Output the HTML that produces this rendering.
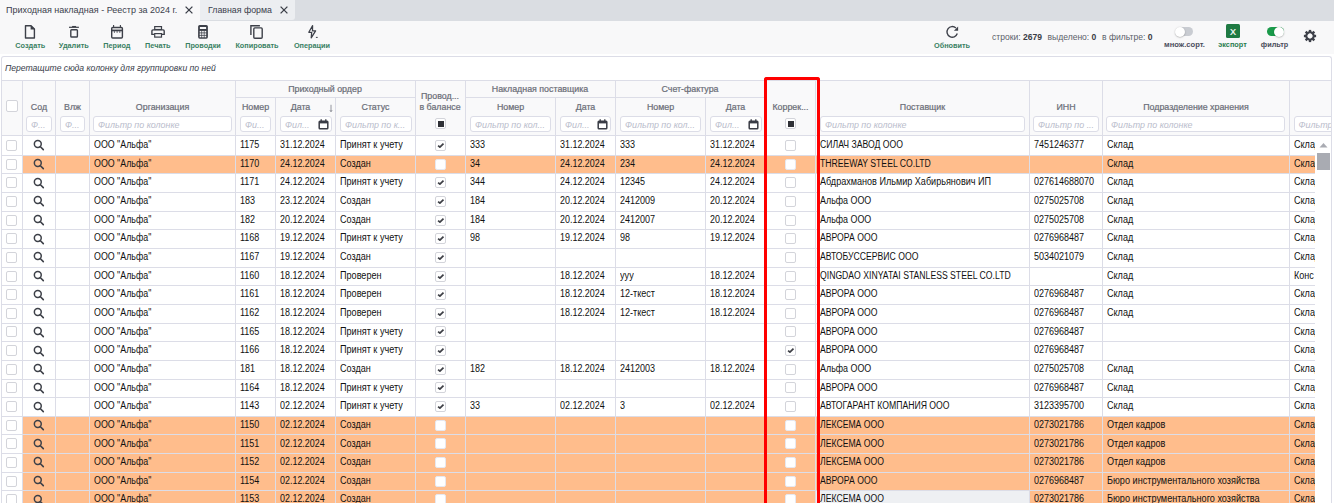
<!DOCTYPE html><html><head><meta charset="utf-8"><style>

html,body{margin:0;padding:0;}
body{width:1334px;height:503px;overflow:hidden;position:relative;background:#fff;font-family:"Liberation Sans", sans-serif;}
.t{position:absolute;white-space:nowrap;line-height:0;height:0;}
.t::before{content:"";}
.cb{position:absolute;box-sizing:border-box;width:11px;height:11px;border:1px solid #d3d4da;border-radius:2px;background:#fff;}
.fb{position:absolute;box-sizing:border-box;height:16px;border:1px solid #dcdde7;border-radius:3px;background:#fff;overflow:hidden;}
.ph{position:absolute;left:4px;top:7.69px;line-height:0;font-style:italic;font-size:8.9px;color:#b9bccb;white-space:nowrap;}

</style></head><body>
<div style="position:absolute;left:0px;top:21px;width:1334px;height:33px;background:#f8f8f9;"></div>
<div style="position:absolute;left:0px;top:0px;width:1334px;height:21px;background:#dadde2;"></div>
<div style="position:absolute;left:0px;top:0px;width:200px;height:21px;background:#f8f8f9;"></div>
<div style="position:absolute;left:200px;top:0px;width:95px;height:20px;background:#eceef1;border-radius:0 0 3px 0;"></div>
<div class="t" style="left:6px;top:9.68px;font-size:9.5px;transform:scaleX(0.9474);transform-origin:0 0;color:#3b404c;">Приходная накладная - Реестр за 2024 г.</div>
<div class="t" style="left:207.5px;top:9.68px;font-size:9.5px;transform:scaleX(0.9263);transform-origin:0 0;color:#3b404c;">Главная форма</div>
<svg style="position:absolute;left:183.5px;top:4.699999999999999px" width="10" height="10" viewBox="0 0 10 10"><path d="M1.6 1.6 L8.4 8.4 M8.4 1.6 L1.6 8.4" stroke="#3b3f48" stroke-width="1.3"/></svg>
<svg style="position:absolute;left:278.6px;top:4.699999999999999px" width="10" height="10" viewBox="0 0 10 10"><path d="M1.6 1.6 L8.4 8.4 M8.4 1.6 L1.6 8.4" stroke="#3b3f48" stroke-width="1.3"/></svg>
<svg style="position:absolute;left:0;top:0" width="1334" height="60" viewBox="0 0 1334 60"><path d="M25.5 25.7 H31.0 L34.4 29.1 V38.0 H25.5 Z" fill="none" stroke="#3d4049" stroke-width="1.4" stroke-linejoin="round"/><path d="M30.6 25.0 L35.1 29.5 H30.6 Z" fill="#3d4049"/><path d="M69 27.3 H78.9" stroke="#3d4049" stroke-width="1.2"/><path d="M72.1 26.5 H76.1" stroke="#3d4049" stroke-width="1.1"/><rect x="70.8" y="29.7" width="6.6" height="7.3" rx="0.8" fill="none" stroke="#3d4049" stroke-width="1.4"/><rect x="111.7" y="27.5" width="10.7" height="10.5" rx="1" fill="none" stroke="#3d4049" stroke-width="1.4"/><rect x="111.7" y="29.6" width="10.7" height="1.7" fill="#3d4049"/><path d="M113.6 25 V27.6 M120.4 25 V27.6" stroke="#3d4049" stroke-width="1.1"/><path d="M114.4 31.2 V32.8 M117.1 31.2 V32.8 M119.8 31.2 V32.8" stroke="#3d4049" stroke-width="0.9"/><rect x="154.7" y="26.6" width="6.8" height="2.9" fill="none" stroke="#3d4049" stroke-width="1.2"/><path d="M154.2 34.4 H151.9 V31 Q151.9 29.9 153 29.9 H163.1 Q164.2 29.9 164.2 31 V34.4 H162" fill="none" stroke="#3d4049" stroke-width="1.4"/><rect x="154.7" y="33.6" width="6.8" height="3.5" fill="none" stroke="#3d4049" stroke-width="1.2"/><rect x="198.1" y="25" width="9.8" height="13.7" rx="1.6" fill="#3d4049"/><rect x="199.9" y="27" width="6.2" height="2" fill="#f8f8f9"/><rect x="199.7" y="30.9" width="1.7" height="1.6" fill="#f8f8f9"/><rect x="199.7" y="33.3" width="1.7" height="1.6" fill="#f8f8f9"/><rect x="199.7" y="35.7" width="1.7" height="1.6" fill="#f8f8f9"/><rect x="202.1" y="30.9" width="1.7" height="1.6" fill="#f8f8f9"/><rect x="202.1" y="33.3" width="1.7" height="1.6" fill="#f8f8f9"/><rect x="202.1" y="35.7" width="1.7" height="1.6" fill="#f8f8f9"/><rect x="204.5" y="30.9" width="1.7" height="1.6" fill="#f8f8f9"/><rect x="204.5" y="33.3" width="1.7" height="1.6" fill="#f8f8f9"/><rect x="204.5" y="35.7" width="1.7" height="1.6" fill="#f8f8f9"/><path d="M250.9 34.9 V25.7 H259.9" fill="none" stroke="#3d4049" stroke-width="1.4"/><rect x="253.8" y="27.9" width="8.4" height="10.3" rx="1" fill="none" stroke="#3d4049" stroke-width="1.4"/><path d="M312.6 25.6 L308.8 32.3 H311.7 L311.2 37.9 L315.6 30.8 H312.5 Z" fill="none" stroke="#3d4049" stroke-width="1.25" stroke-linejoin="round"/><path d="M315.9 37.4 H317.7" stroke="#3d4049" stroke-width="1.0"/><path d="M957.3 33.6 A5.3 5.3 0 1 1 955.9 28.0" fill="none" stroke="#3d4049" stroke-width="1.4"/><path d="M958.1 26.6 V30.8 H953.9 Z" fill="#3d4049"/></svg>
<div class="t" style="left:-29.7px;width:120px;text-align:center;top:46.05px;font-size:7.3px;font-weight:bold;color:#3a8163;">Создать</div>
<div class="t" style="left:13.799999999999997px;width:120px;text-align:center;top:46.05px;font-size:7.3px;font-weight:bold;color:#3a8163;">Удалить</div>
<div class="t" style="left:56.8px;width:120px;text-align:center;top:46.05px;font-size:7.3px;font-weight:bold;color:#3a8163;">Период</div>
<div class="t" style="left:97.80000000000001px;width:120px;text-align:center;top:46.05px;font-size:7.3px;font-weight:bold;color:#3a8163;">Печать</div>
<div class="t" style="left:143px;width:120px;text-align:center;top:46.05px;font-size:7.3px;font-weight:bold;color:#3a8163;">Проводки</div>
<div class="t" style="left:197px;width:120px;text-align:center;top:46.05px;font-size:7.3px;font-weight:bold;color:#3a8163;">Копировать</div>
<div class="t" style="left:252px;width:120px;text-align:center;top:46.05px;font-size:7.3px;font-weight:bold;color:#3a8163;">Операции</div>
<div class="t" style="left:892px;width:120px;text-align:center;top:45.65px;font-size:7.3px;font-weight:bold;color:#3a8163;">Обновить</div>
<div class="t" style="left:992px;top:37.01px;font-size:8.55px;color:#5b5f6a;">строки: <b style="color:#3a3d46">2679</b></div>
<div class="t" style="left:1047.5px;top:37.01px;font-size:8.55px;color:#5b5f6a;">выделено: <b style="color:#3a3d46">0</b></div>
<div class="t" style="left:1102px;top:37.01px;font-size:8.55px;color:#5b5f6a;">в фильтре: <b style="color:#3a3d46">0</b></div>
<div style="position:absolute;left:1176px;top:27px;width:17px;height:9px;border-radius:5px;background:#c9ccd2;"></div>
<div style="position:absolute;left:1175px;top:26.5px;width:10px;height:10px;border-radius:50%;background:#fff;box-shadow:0 0.5px 1.5px rgba(0,0,0,0.35);"></div>
<div class="t" style="left:1124.5px;width:120px;text-align:center;top:45.14px;font-size:7.6px;font-weight:bold;color:#4a4d5c;">множ.сорт.</div>
<div style="position:absolute;left:1226px;top:24px;width:14px;height:14px;border-radius:1.5px;background:#1f7a43;"></div>
<div class="t" style="left:1226px;width:14px;text-align:center;top:31.85px;font-size:9px;color:#fff;-webkit-text-stroke:0.2px #fff;">X</div>
<div class="t" style="left:1172.5px;width:120px;text-align:center;top:45.45px;font-size:7.3px;font-weight:bold;color:#2a7d4f;">экспорт</div>
<div style="position:absolute;left:1267px;top:27px;width:17px;height:9px;border-radius:5px;background:#1a9a4a;"></div>
<div style="position:absolute;left:1274px;top:26.5px;width:10px;height:10px;border-radius:50%;background:#fff;box-shadow:0 0.5px 1.5px rgba(0,0,0,0.35);"></div>
<div class="t" style="left:1214.5px;width:120px;text-align:center;top:45.45px;font-size:7.3px;font-weight:bold;color:#4a4d5c;">фильтр</div>
<svg style="position:absolute;left:1302.9px;top:28.7px" width="14" height="14" viewBox="-7 -7 14 14"><rect x="-1.2" y="-6.1" width="2.4" height="3" fill="#3d4049" transform="rotate(0)"/><rect x="-1.2" y="-6.1" width="2.4" height="3" fill="#3d4049" transform="rotate(45)"/><rect x="-1.2" y="-6.1" width="2.4" height="3" fill="#3d4049" transform="rotate(90)"/><rect x="-1.2" y="-6.1" width="2.4" height="3" fill="#3d4049" transform="rotate(135)"/><rect x="-1.2" y="-6.1" width="2.4" height="3" fill="#3d4049" transform="rotate(180)"/><rect x="-1.2" y="-6.1" width="2.4" height="3" fill="#3d4049" transform="rotate(225)"/><rect x="-1.2" y="-6.1" width="2.4" height="3" fill="#3d4049" transform="rotate(270)"/><rect x="-1.2" y="-6.1" width="2.4" height="3" fill="#3d4049" transform="rotate(315)"/><circle r="3.7" fill="none" stroke="#3d4049" stroke-width="2.1"/></svg>
<div style="position:absolute;left:1px;top:56px;width:1331px;height:447px;box-sizing:border-box;border:1px solid #dcdde7;border-radius:3px 3px 0 0;background:#fff;border-bottom:none;"></div>
<div class="t" style="left:5px;top:67.98px;font-size:8.62px;font-style:italic;color:#383d4a;">Перетащите сюда колонку для группировки по ней</div>
<div style="position:absolute;left:2px;top:81px;width:1329px;height:54px;background:#f9f9fa;"></div>
<div style="position:absolute;left:1px;top:80px;width:1331px;height:1px;background:#dcdde7;"></div>
<div style="position:absolute;left:1px;top:135px;width:1331px;height:1px;background:#dcdde7;"></div>
<div style="position:absolute;left:22px;top:81px;width:1px;height:54px;background:#dcdde7;"></div>
<div style="position:absolute;left:55px;top:81px;width:1px;height:54px;background:#dcdde7;"></div>
<div style="position:absolute;left:89px;top:81px;width:1px;height:54px;background:#dcdde7;"></div>
<div style="position:absolute;left:235px;top:81px;width:1px;height:54px;background:#dcdde7;"></div>
<div style="position:absolute;left:275px;top:98px;width:1px;height:37px;background:#dcdde7;"></div>
<div style="position:absolute;left:335px;top:98px;width:1px;height:37px;background:#dcdde7;"></div>
<div style="position:absolute;left:415px;top:81px;width:1px;height:54px;background:#dcdde7;"></div>
<div style="position:absolute;left:465px;top:81px;width:1px;height:54px;background:#dcdde7;"></div>
<div style="position:absolute;left:555px;top:98px;width:1px;height:37px;background:#dcdde7;"></div>
<div style="position:absolute;left:615px;top:81px;width:1px;height:54px;background:#dcdde7;"></div>
<div style="position:absolute;left:705px;top:98px;width:1px;height:37px;background:#dcdde7;"></div>
<div style="position:absolute;left:765px;top:81px;width:1px;height:54px;background:#dcdde7;"></div>
<div style="position:absolute;left:815px;top:81px;width:1px;height:54px;background:#dcdde7;"></div>
<div style="position:absolute;left:1029px;top:81px;width:1px;height:54px;background:#dcdde7;"></div>
<div style="position:absolute;left:1102px;top:81px;width:1px;height:54px;background:#dcdde7;"></div>
<div style="position:absolute;left:1289px;top:81px;width:1px;height:54px;background:#dcdde7;"></div>
<div style="position:absolute;left:235px;top:97px;width:180px;height:1px;background:#dcdde7;"></div>
<div style="position:absolute;left:465px;top:97px;width:300px;height:1px;background:#dcdde7;"></div>
<div class="t" style="left:235px;width:180px;text-align:center;top:88.90px;font-size:8.85px;color:#6b6e78;-webkit-text-stroke:0.22px #6b6e78;">Приходный ордер</div>
<div class="t" style="left:465px;width:150px;text-align:center;top:88.90px;font-size:8.85px;color:#6b6e78;-webkit-text-stroke:0.22px #6b6e78;">Накладная поставщика</div>
<div class="t" style="left:615px;width:150px;text-align:center;top:88.90px;font-size:8.85px;color:#6b6e78;-webkit-text-stroke:0.22px #6b6e78;">Счет-фактура</div>
<div class="t" style="left:23px;width:32px;text-align:center;top:106.90px;font-size:8.85px;color:#6b6e78;-webkit-text-stroke:0.22px #6b6e78;">Сод</div>
<div class="t" style="left:56px;width:33px;text-align:center;top:106.90px;font-size:8.85px;color:#6b6e78;-webkit-text-stroke:0.22px #6b6e78;">Влж</div>
<div class="t" style="left:90px;width:145px;text-align:center;top:106.90px;font-size:8.85px;color:#6b6e78;-webkit-text-stroke:0.22px #6b6e78;">Организация</div>
<div class="t" style="left:236px;width:39px;text-align:center;top:106.90px;font-size:8.85px;color:#6b6e78;-webkit-text-stroke:0.22px #6b6e78;">Номер</div>
<div class="t" style="left:276px;width:49px;text-align:center;top:106.90px;font-size:8.85px;color:#6b6e78;-webkit-text-stroke:0.22px #6b6e78;">Дата</div>
<div class="t" style="left:336px;width:79px;text-align:center;top:106.90px;font-size:8.85px;color:#6b6e78;-webkit-text-stroke:0.22px #6b6e78;">Статус</div>
<div class="t" style="left:466px;width:89px;text-align:center;top:106.90px;font-size:8.85px;color:#6b6e78;-webkit-text-stroke:0.22px #6b6e78;">Номер</div>
<div class="t" style="left:556px;width:59px;text-align:center;top:106.90px;font-size:8.85px;color:#6b6e78;-webkit-text-stroke:0.22px #6b6e78;">Дата</div>
<div class="t" style="left:616px;width:89px;text-align:center;top:106.90px;font-size:8.85px;color:#6b6e78;-webkit-text-stroke:0.22px #6b6e78;">Номер</div>
<div class="t" style="left:706px;width:59px;text-align:center;top:106.90px;font-size:8.85px;color:#6b6e78;-webkit-text-stroke:0.22px #6b6e78;">Дата</div>
<div class="t" style="left:766px;width:49px;text-align:center;top:106.90px;font-size:8.85px;color:#6b6e78;-webkit-text-stroke:0.22px #6b6e78;">Коррек...</div>
<div class="t" style="left:816px;width:213px;text-align:center;top:106.90px;font-size:8.85px;color:#6b6e78;-webkit-text-stroke:0.22px #6b6e78;">Поставщик</div>
<div class="t" style="left:1030px;width:72px;text-align:center;top:106.90px;font-size:8.85px;color:#6b6e78;-webkit-text-stroke:0.22px #6b6e78;">ИНН</div>
<div class="t" style="left:1103px;width:186px;text-align:center;top:106.90px;font-size:8.85px;color:#6b6e78;-webkit-text-stroke:0.22px #6b6e78;">Подразделение хранения</div>
<div class="t" style="left:415px;width:50px;text-align:center;top:95.90px;font-size:8.85px;color:#6b6e78;-webkit-text-stroke:0.22px #6b6e78;">Провод...</div>
<div class="t" style="left:415px;width:50px;text-align:center;top:106.50px;font-size:8.85px;color:#6b6e78;-webkit-text-stroke:0.22px #6b6e78;">в балансе</div>
<svg style="position:absolute;left:328px;top:104px" width="6" height="9" viewBox="0 0 6 9"><path d="M3 0.8 V7.6 M1.9 6.2 L3 7.7 L4.1 6.2" fill="none" stroke="#7a7c85" stroke-width="0.8"/></svg>
<div class="cb" style="left:6px;top:100px;width:12px;height:12px;"></div>
<div class="fb" style="left:26px;top:116px;width:26px;"><span class="ph">Ф...</span></div>
<div class="fb" style="left:60px;top:116px;width:25px;"><span class="ph">Ф...</span></div>
<div class="fb" style="left:93px;top:116px;width:138.5px;"><span class="ph">Фильтр по колонке</span></div>
<div class="fb" style="left:240px;top:116px;width:31px;"><span class="ph">Фи...</span></div>
<div class="fb" style="left:280px;top:116px;width:51.5px;"><span class="ph">Фил...</span></div>
<svg style="position:absolute;left:317.5px;top:119px" width="11" height="11" viewBox="0 0 11 11"><rect x="1.2" y="2.2" width="8.6" height="7.6" rx="0.8" fill="none" stroke="#3a3d46" stroke-width="1.5"/><path d="M1.2 2.2 H9.8 V4.4 H1.2Z" fill="#3a3d46"/><path d="M3.2 0.3 V2.5 M7.8 0.3 V2.5" stroke="#3a3d46" stroke-width="1.3"/></svg>
<div class="fb" style="left:340px;top:116px;width:71.5px;"><span class="ph">Фильтр по к...</span></div>
<div class="fb" style="left:470px;top:116px;width:81px;"><span class="ph">Фильтр по кол...</span></div>
<div class="fb" style="left:560px;top:116px;width:51px;"><span class="ph">Фил...</span></div>
<svg style="position:absolute;left:597px;top:119px" width="11" height="11" viewBox="0 0 11 11"><rect x="1.2" y="2.2" width="8.6" height="7.6" rx="0.8" fill="none" stroke="#3a3d46" stroke-width="1.5"/><path d="M1.2 2.2 H9.8 V4.4 H1.2Z" fill="#3a3d46"/><path d="M3.2 0.3 V2.5 M7.8 0.3 V2.5" stroke="#3a3d46" stroke-width="1.3"/></svg>
<div class="fb" style="left:620px;top:116px;width:81px;"><span class="ph">Фильтр по кол...</span></div>
<div class="fb" style="left:710px;top:116px;width:51.5px;"><span class="ph">Фил...</span></div>
<svg style="position:absolute;left:747.5px;top:119px" width="11" height="11" viewBox="0 0 11 11"><rect x="1.2" y="2.2" width="8.6" height="7.6" rx="0.8" fill="none" stroke="#3a3d46" stroke-width="1.5"/><path d="M1.2 2.2 H9.8 V4.4 H1.2Z" fill="#3a3d46"/><path d="M3.2 0.3 V2.5 M7.8 0.3 V2.5" stroke="#3a3d46" stroke-width="1.3"/></svg>
<div class="fb" style="left:820px;top:116px;width:205px;"><span class="ph">Фильтр по колонке</span></div>
<div class="fb" style="left:1033px;top:116px;width:65.5px;"><span class="ph">Фильтр по ...</span></div>
<div class="fb" style="left:1106px;top:116px;width:179px;"><span class="ph">Фильтр по колонке</span></div>
<div class="fb" style="left:1293.5px;top:116px;width:46.5px;"><span class="ph">Фильтр по колонке</span></div>
<div style="position:absolute;left:1332px;top:56px;width:2px;height:447px;background:#fff;"></div>
<div style="position:absolute;left:1331px;top:60px;width:1px;height:443px;background:#dcdde7;"></div>
<div class="cb" style="left:435px;top:118px;width:11px;height:11px;border-color:#d3d4da;"><div style="position:absolute;left:1.5px;top:1.5px;width:6px;height:6px;background:#2f3136;"></div></div>
<div class="cb" style="left:785px;top:118px;width:11px;height:11px;border-color:#d3d4da;"><div style="position:absolute;left:1.5px;top:1.5px;width:6px;height:6px;background:#2f3136;"></div></div>
<div style="position:absolute;left:0;top:136px;width:1315px;height:400px;overflow:hidden;">
<div style="position:absolute;left:1px;top:19px;width:1314px;height:1px;background:#dcdde7;"></div>
<div class="t" style="left:94px;top:9.10px;font-size:10.00px;color:#111;transform:scaleX(0.8850);transform-origin:0 0;">ООО &quot;Альфа&quot;</div>
<div class="t" style="left:240px;top:9.10px;font-size:10.00px;color:#111;transform:scaleX(0.9000);transform-origin:0 0;">1175</div>
<div class="t" style="left:280px;top:9.10px;font-size:10.00px;color:#111;transform:scaleX(0.8930);transform-origin:0 0;">31.12.2024</div>
<div class="t" style="left:340px;top:9.10px;font-size:10.00px;color:#111;transform:scaleX(0.9108);transform-origin:0 0;">Принят к учету</div>
<div class="t" style="left:470px;top:9.10px;font-size:10.00px;color:#111;transform:scaleX(0.9000);transform-origin:0 0;">333</div>
<div class="t" style="left:560px;top:9.10px;font-size:10.00px;color:#111;transform:scaleX(0.8930);transform-origin:0 0;">31.12.2024</div>
<div class="t" style="left:620px;top:9.10px;font-size:10.00px;color:#111;transform:scaleX(0.9000);transform-origin:0 0;">333</div>
<div class="t" style="left:710px;top:9.10px;font-size:10.00px;color:#111;transform:scaleX(0.8930);transform-origin:0 0;">31.12.2024</div>
<div class="t" style="left:820px;top:9.10px;font-size:10.00px;color:#111;transform:scaleX(0.8650);transform-origin:0 0;">СИЛАЧ ЗАВОД ООО</div>
<div class="t" style="left:1034px;top:9.10px;font-size:10.00px;color:#111;transform:scaleX(0.9000);transform-origin:0 0;">7451246377</div>
<div class="t" style="left:1107px;top:9.10px;font-size:10.00px;color:#111;transform:scaleX(0.9050);transform-origin:0 0;">Склад</div>
<div class="t" style="left:1294px;top:9.10px;font-size:10.00px;color:#111;transform:scaleX(0.9050);transform-origin:0 0;">Склад</div>
<div class="cb" style="left:6px;top:4px;"></div>
<svg style="position:absolute;left:33.2px;top:3.40px" width="12" height="12" viewBox="0 0 12 12"><circle cx="4.8" cy="5" r="3.45" fill="none" stroke="#3d4048" stroke-width="1.5"/><path d="M7.2 7.5 L10.3 10.6" stroke="#3d4048" stroke-width="1.6" stroke-linecap="round"/></svg>
<div class="cb" style="left:435px;top:4px;border-color:#d3d4da;"><svg style="position:absolute;left:1px;top:1px" width="8" height="8" viewBox="0 0 8 8"><path d="M1.1 3.6 L2.9 5.2 L6.5 1.6" fill="none" stroke="#3d3f45" stroke-width="1.7" stroke-linejoin="round"/></svg></div>
<div class="cb" style="left:785px;top:4px;border-color:#d3d4da;"></div>
<div style="position:absolute;left:22px;top:20px;width:1293px;height:17px;background:#ffbd8c;"></div>
<div style="position:absolute;left:1px;top:37px;width:1314px;height:1px;background:#dcdde7;"></div>
<div class="t" style="left:94px;top:27.75px;font-size:10.00px;color:#111;transform:scaleX(0.8850);transform-origin:0 0;">ООО &quot;Альфа&quot;</div>
<div class="t" style="left:240px;top:27.75px;font-size:10.00px;color:#111;transform:scaleX(0.9000);transform-origin:0 0;">1170</div>
<div class="t" style="left:280px;top:27.75px;font-size:10.00px;color:#111;transform:scaleX(0.8930);transform-origin:0 0;">24.12.2024</div>
<div class="t" style="left:340px;top:27.75px;font-size:10.00px;color:#111;transform:scaleX(0.9067);transform-origin:0 0;">Создан</div>
<div class="t" style="left:470px;top:27.75px;font-size:10.00px;color:#111;transform:scaleX(0.9000);transform-origin:0 0;">34</div>
<div class="t" style="left:560px;top:27.75px;font-size:10.00px;color:#111;transform:scaleX(0.8930);transform-origin:0 0;">24.12.2024</div>
<div class="t" style="left:620px;top:27.75px;font-size:10.00px;color:#111;transform:scaleX(0.9000);transform-origin:0 0;">234</div>
<div class="t" style="left:710px;top:27.75px;font-size:10.00px;color:#111;transform:scaleX(0.8930);transform-origin:0 0;">24.12.2024</div>
<div class="t" style="left:820px;top:27.75px;font-size:10.00px;color:#111;transform:scaleX(0.8650);transform-origin:0 0;">THREEWAY STEEL CO.LTD</div>
<div class="t" style="left:1107px;top:27.75px;font-size:10.00px;color:#111;transform:scaleX(0.9050);transform-origin:0 0;">Склад</div>
<div class="t" style="left:1294px;top:27.75px;font-size:10.00px;color:#111;transform:scaleX(0.9050);transform-origin:0 0;">Склад</div>
<div class="cb" style="left:6px;top:23px;"></div>
<svg style="position:absolute;left:33.2px;top:22.05px" width="12" height="12" viewBox="0 0 12 12"><circle cx="4.8" cy="5" r="3.45" fill="none" stroke="#3d4048" stroke-width="1.5"/><path d="M7.2 7.5 L10.3 10.6" stroke="#3d4048" stroke-width="1.6" stroke-linecap="round"/></svg>
<div class="cb" style="left:435px;top:23px;border-color:#e6e8f0;"></div>
<div class="cb" style="left:785px;top:23px;border-color:#e6e8f0;"></div>
<div style="position:absolute;left:1px;top:56px;width:1314px;height:1px;background:#dcdde7;"></div>
<div class="t" style="left:94px;top:46.40px;font-size:10.00px;color:#111;transform:scaleX(0.8850);transform-origin:0 0;">ООО &quot;Альфа&quot;</div>
<div class="t" style="left:240px;top:46.40px;font-size:10.00px;color:#111;transform:scaleX(0.9000);transform-origin:0 0;">1171</div>
<div class="t" style="left:280px;top:46.40px;font-size:10.00px;color:#111;transform:scaleX(0.8930);transform-origin:0 0;">24.12.2024</div>
<div class="t" style="left:340px;top:46.40px;font-size:10.00px;color:#111;transform:scaleX(0.9108);transform-origin:0 0;">Принят к учету</div>
<div class="t" style="left:470px;top:46.40px;font-size:10.00px;color:#111;transform:scaleX(0.9000);transform-origin:0 0;">344</div>
<div class="t" style="left:560px;top:46.40px;font-size:10.00px;color:#111;transform:scaleX(0.8930);transform-origin:0 0;">24.12.2024</div>
<div class="t" style="left:620px;top:46.40px;font-size:10.00px;color:#111;transform:scaleX(0.9000);transform-origin:0 0;">12345</div>
<div class="t" style="left:710px;top:46.40px;font-size:10.00px;color:#111;transform:scaleX(0.8930);transform-origin:0 0;">24.12.2024</div>
<div class="t" style="left:820px;top:46.40px;font-size:10.00px;color:#111;transform:scaleX(0.9069);transform-origin:0 0;">Абдрахманов Ильмир Хабирьянович ИП</div>
<div class="t" style="left:1034px;top:46.40px;font-size:10.00px;color:#111;transform:scaleX(0.9000);transform-origin:0 0;">027614688070</div>
<div class="t" style="left:1107px;top:46.40px;font-size:10.00px;color:#111;transform:scaleX(0.9050);transform-origin:0 0;">Склад</div>
<div class="t" style="left:1294px;top:46.40px;font-size:10.00px;color:#111;transform:scaleX(0.9050);transform-origin:0 0;">Склад</div>
<div class="cb" style="left:6px;top:41px;"></div>
<svg style="position:absolute;left:33.2px;top:40.70px" width="12" height="12" viewBox="0 0 12 12"><circle cx="4.8" cy="5" r="3.45" fill="none" stroke="#3d4048" stroke-width="1.5"/><path d="M7.2 7.5 L10.3 10.6" stroke="#3d4048" stroke-width="1.6" stroke-linecap="round"/></svg>
<div class="cb" style="left:435px;top:41px;border-color:#d3d4da;"><svg style="position:absolute;left:1px;top:1px" width="8" height="8" viewBox="0 0 8 8"><path d="M1.1 3.6 L2.9 5.2 L6.5 1.6" fill="none" stroke="#3d3f45" stroke-width="1.7" stroke-linejoin="round"/></svg></div>
<div class="cb" style="left:785px;top:41px;border-color:#d3d4da;"></div>
<div style="position:absolute;left:1px;top:75px;width:1314px;height:1px;background:#dcdde7;"></div>
<div class="t" style="left:94px;top:65.05px;font-size:10.00px;color:#111;transform:scaleX(0.8850);transform-origin:0 0;">ООО &quot;Альфа&quot;</div>
<div class="t" style="left:240px;top:65.05px;font-size:10.00px;color:#111;transform:scaleX(0.9000);transform-origin:0 0;">183</div>
<div class="t" style="left:280px;top:65.05px;font-size:10.00px;color:#111;transform:scaleX(0.8930);transform-origin:0 0;">23.12.2024</div>
<div class="t" style="left:340px;top:65.05px;font-size:10.00px;color:#111;transform:scaleX(0.9067);transform-origin:0 0;">Создан</div>
<div class="t" style="left:470px;top:65.05px;font-size:10.00px;color:#111;transform:scaleX(0.9000);transform-origin:0 0;">184</div>
<div class="t" style="left:560px;top:65.05px;font-size:10.00px;color:#111;transform:scaleX(0.8930);transform-origin:0 0;">20.12.2024</div>
<div class="t" style="left:620px;top:65.05px;font-size:10.00px;color:#111;transform:scaleX(0.9000);transform-origin:0 0;">2412009</div>
<div class="t" style="left:710px;top:65.05px;font-size:10.00px;color:#111;transform:scaleX(0.8930);transform-origin:0 0;">20.12.2024</div>
<div class="t" style="left:820px;top:65.05px;font-size:10.00px;color:#111;transform:scaleX(0.8900);transform-origin:0 0;">Альфа ООО</div>
<div class="t" style="left:1034px;top:65.05px;font-size:10.00px;color:#111;transform:scaleX(0.9000);transform-origin:0 0;">0275025708</div>
<div class="t" style="left:1107px;top:65.05px;font-size:10.00px;color:#111;transform:scaleX(0.9050);transform-origin:0 0;">Склад</div>
<div class="t" style="left:1294px;top:65.05px;font-size:10.00px;color:#111;transform:scaleX(0.9050);transform-origin:0 0;">Склад</div>
<div class="cb" style="left:6px;top:60px;"></div>
<svg style="position:absolute;left:33.2px;top:59.35px" width="12" height="12" viewBox="0 0 12 12"><circle cx="4.8" cy="5" r="3.45" fill="none" stroke="#3d4048" stroke-width="1.5"/><path d="M7.2 7.5 L10.3 10.6" stroke="#3d4048" stroke-width="1.6" stroke-linecap="round"/></svg>
<div class="cb" style="left:435px;top:60px;border-color:#d3d4da;"><svg style="position:absolute;left:1px;top:1px" width="8" height="8" viewBox="0 0 8 8"><path d="M1.1 3.6 L2.9 5.2 L6.5 1.6" fill="none" stroke="#3d3f45" stroke-width="1.7" stroke-linejoin="round"/></svg></div>
<div class="cb" style="left:785px;top:60px;border-color:#d3d4da;"></div>
<div style="position:absolute;left:1px;top:93px;width:1314px;height:1px;background:#dcdde7;"></div>
<div class="t" style="left:94px;top:83.70px;font-size:10.00px;color:#111;transform:scaleX(0.8850);transform-origin:0 0;">ООО &quot;Альфа&quot;</div>
<div class="t" style="left:240px;top:83.70px;font-size:10.00px;color:#111;transform:scaleX(0.9000);transform-origin:0 0;">182</div>
<div class="t" style="left:280px;top:83.70px;font-size:10.00px;color:#111;transform:scaleX(0.8930);transform-origin:0 0;">20.12.2024</div>
<div class="t" style="left:340px;top:83.70px;font-size:10.00px;color:#111;transform:scaleX(0.9067);transform-origin:0 0;">Создан</div>
<div class="t" style="left:470px;top:83.70px;font-size:10.00px;color:#111;transform:scaleX(0.9000);transform-origin:0 0;">184</div>
<div class="t" style="left:560px;top:83.70px;font-size:10.00px;color:#111;transform:scaleX(0.8930);transform-origin:0 0;">20.12.2024</div>
<div class="t" style="left:620px;top:83.70px;font-size:10.00px;color:#111;transform:scaleX(0.9000);transform-origin:0 0;">2412007</div>
<div class="t" style="left:710px;top:83.70px;font-size:10.00px;color:#111;transform:scaleX(0.8930);transform-origin:0 0;">20.12.2024</div>
<div class="t" style="left:820px;top:83.70px;font-size:10.00px;color:#111;transform:scaleX(0.8900);transform-origin:0 0;">Альфа ООО</div>
<div class="t" style="left:1034px;top:83.70px;font-size:10.00px;color:#111;transform:scaleX(0.9000);transform-origin:0 0;">0275025708</div>
<div class="t" style="left:1107px;top:83.70px;font-size:10.00px;color:#111;transform:scaleX(0.9050);transform-origin:0 0;">Склад</div>
<div class="t" style="left:1294px;top:83.70px;font-size:10.00px;color:#111;transform:scaleX(0.9050);transform-origin:0 0;">Склад</div>
<div class="cb" style="left:6px;top:79px;"></div>
<svg style="position:absolute;left:33.2px;top:78.00px" width="12" height="12" viewBox="0 0 12 12"><circle cx="4.8" cy="5" r="3.45" fill="none" stroke="#3d4048" stroke-width="1.5"/><path d="M7.2 7.5 L10.3 10.6" stroke="#3d4048" stroke-width="1.6" stroke-linecap="round"/></svg>
<div class="cb" style="left:435px;top:79px;border-color:#d3d4da;"><svg style="position:absolute;left:1px;top:1px" width="8" height="8" viewBox="0 0 8 8"><path d="M1.1 3.6 L2.9 5.2 L6.5 1.6" fill="none" stroke="#3d3f45" stroke-width="1.7" stroke-linejoin="round"/></svg></div>
<div class="cb" style="left:785px;top:79px;border-color:#d3d4da;"></div>
<div style="position:absolute;left:1px;top:112px;width:1314px;height:1px;background:#dcdde7;"></div>
<div class="t" style="left:94px;top:102.35px;font-size:10.00px;color:#111;transform:scaleX(0.8850);transform-origin:0 0;">ООО &quot;Альфа&quot;</div>
<div class="t" style="left:240px;top:102.35px;font-size:10.00px;color:#111;transform:scaleX(0.9000);transform-origin:0 0;">1168</div>
<div class="t" style="left:280px;top:102.35px;font-size:10.00px;color:#111;transform:scaleX(0.8930);transform-origin:0 0;">19.12.2024</div>
<div class="t" style="left:340px;top:102.35px;font-size:10.00px;color:#111;transform:scaleX(0.9108);transform-origin:0 0;">Принят к учету</div>
<div class="t" style="left:470px;top:102.35px;font-size:10.00px;color:#111;transform:scaleX(0.9000);transform-origin:0 0;">98</div>
<div class="t" style="left:560px;top:102.35px;font-size:10.00px;color:#111;transform:scaleX(0.8930);transform-origin:0 0;">19.12.2024</div>
<div class="t" style="left:620px;top:102.35px;font-size:10.00px;color:#111;transform:scaleX(0.9000);transform-origin:0 0;">98</div>
<div class="t" style="left:710px;top:102.35px;font-size:10.00px;color:#111;transform:scaleX(0.8930);transform-origin:0 0;">19.12.2024</div>
<div class="t" style="left:820px;top:102.35px;font-size:10.00px;color:#111;transform:scaleX(0.8650);transform-origin:0 0;">АВРОРА ООО</div>
<div class="t" style="left:1034px;top:102.35px;font-size:10.00px;color:#111;transform:scaleX(0.9000);transform-origin:0 0;">0276968487</div>
<div class="t" style="left:1107px;top:102.35px;font-size:10.00px;color:#111;transform:scaleX(0.9050);transform-origin:0 0;">Склад</div>
<div class="t" style="left:1294px;top:102.35px;font-size:10.00px;color:#111;transform:scaleX(0.9050);transform-origin:0 0;">Склад</div>
<div class="cb" style="left:6px;top:97px;"></div>
<svg style="position:absolute;left:33.2px;top:96.65px" width="12" height="12" viewBox="0 0 12 12"><circle cx="4.8" cy="5" r="3.45" fill="none" stroke="#3d4048" stroke-width="1.5"/><path d="M7.2 7.5 L10.3 10.6" stroke="#3d4048" stroke-width="1.6" stroke-linecap="round"/></svg>
<div class="cb" style="left:435px;top:97px;border-color:#d3d4da;"><svg style="position:absolute;left:1px;top:1px" width="8" height="8" viewBox="0 0 8 8"><path d="M1.1 3.6 L2.9 5.2 L6.5 1.6" fill="none" stroke="#3d3f45" stroke-width="1.7" stroke-linejoin="round"/></svg></div>
<div class="cb" style="left:785px;top:97px;border-color:#d3d4da;"></div>
<div style="position:absolute;left:1px;top:131px;width:1314px;height:1px;background:#dcdde7;"></div>
<div class="t" style="left:94px;top:121.00px;font-size:10.00px;color:#111;transform:scaleX(0.8850);transform-origin:0 0;">ООО &quot;Альфа&quot;</div>
<div class="t" style="left:240px;top:121.00px;font-size:10.00px;color:#111;transform:scaleX(0.9000);transform-origin:0 0;">1167</div>
<div class="t" style="left:280px;top:121.00px;font-size:10.00px;color:#111;transform:scaleX(0.8930);transform-origin:0 0;">19.12.2024</div>
<div class="t" style="left:340px;top:121.00px;font-size:10.00px;color:#111;transform:scaleX(0.9067);transform-origin:0 0;">Создан</div>
<div class="t" style="left:820px;top:121.00px;font-size:10.00px;color:#111;transform:scaleX(0.8650);transform-origin:0 0;">АВТОБУССЕРВИС ООО</div>
<div class="t" style="left:1034px;top:121.00px;font-size:10.00px;color:#111;transform:scaleX(0.9000);transform-origin:0 0;">5034021079</div>
<div class="t" style="left:1107px;top:121.00px;font-size:10.00px;color:#111;transform:scaleX(0.9050);transform-origin:0 0;">Склад</div>
<div class="t" style="left:1294px;top:121.00px;font-size:10.00px;color:#111;transform:scaleX(0.9050);transform-origin:0 0;">Склад</div>
<div class="cb" style="left:6px;top:116px;"></div>
<svg style="position:absolute;left:33.2px;top:115.30px" width="12" height="12" viewBox="0 0 12 12"><circle cx="4.8" cy="5" r="3.45" fill="none" stroke="#3d4048" stroke-width="1.5"/><path d="M7.2 7.5 L10.3 10.6" stroke="#3d4048" stroke-width="1.6" stroke-linecap="round"/></svg>
<div class="cb" style="left:435px;top:116px;border-color:#d3d4da;"><svg style="position:absolute;left:1px;top:1px" width="8" height="8" viewBox="0 0 8 8"><path d="M1.1 3.6 L2.9 5.2 L6.5 1.6" fill="none" stroke="#3d3f45" stroke-width="1.7" stroke-linejoin="round"/></svg></div>
<div class="cb" style="left:785px;top:116px;border-color:#d3d4da;"></div>
<div style="position:absolute;left:1px;top:149px;width:1314px;height:1px;background:#dcdde7;"></div>
<div class="t" style="left:94px;top:139.65px;font-size:10.00px;color:#111;transform:scaleX(0.8850);transform-origin:0 0;">ООО &quot;Альфа&quot;</div>
<div class="t" style="left:240px;top:139.65px;font-size:10.00px;color:#111;transform:scaleX(0.9000);transform-origin:0 0;">1160</div>
<div class="t" style="left:280px;top:139.65px;font-size:10.00px;color:#111;transform:scaleX(0.8930);transform-origin:0 0;">18.12.2024</div>
<div class="t" style="left:340px;top:139.65px;font-size:10.00px;color:#111;transform:scaleX(0.9088);transform-origin:0 0;">Проверен</div>
<div class="t" style="left:560px;top:139.65px;font-size:10.00px;color:#111;transform:scaleX(0.8930);transform-origin:0 0;">18.12.2024</div>
<div class="t" style="left:620px;top:139.65px;font-size:10.00px;color:#111;transform:scaleX(0.9150);transform-origin:0 0;">ууу</div>
<div class="t" style="left:710px;top:139.65px;font-size:10.00px;color:#111;transform:scaleX(0.8930);transform-origin:0 0;">18.12.2024</div>
<div class="t" style="left:820px;top:139.65px;font-size:10.00px;color:#111;transform:scaleX(0.8650);transform-origin:0 0;">QINGDAO XINYATAI STANLESS STEEL CO.LTD</div>
<div class="t" style="left:1107px;top:139.65px;font-size:10.00px;color:#111;transform:scaleX(0.9050);transform-origin:0 0;">Склад</div>
<div class="t" style="left:1294px;top:139.65px;font-size:10.00px;color:#111;transform:scaleX(0.9025);transform-origin:0 0;">Конс</div>
<div class="cb" style="left:6px;top:135px;"></div>
<svg style="position:absolute;left:33.2px;top:133.95px" width="12" height="12" viewBox="0 0 12 12"><circle cx="4.8" cy="5" r="3.45" fill="none" stroke="#3d4048" stroke-width="1.5"/><path d="M7.2 7.5 L10.3 10.6" stroke="#3d4048" stroke-width="1.6" stroke-linecap="round"/></svg>
<div class="cb" style="left:435px;top:135px;border-color:#d3d4da;"><svg style="position:absolute;left:1px;top:1px" width="8" height="8" viewBox="0 0 8 8"><path d="M1.1 3.6 L2.9 5.2 L6.5 1.6" fill="none" stroke="#3d3f45" stroke-width="1.7" stroke-linejoin="round"/></svg></div>
<div class="cb" style="left:785px;top:135px;border-color:#d3d4da;"></div>
<div style="position:absolute;left:1px;top:168px;width:1314px;height:1px;background:#dcdde7;"></div>
<div class="t" style="left:94px;top:158.30px;font-size:10.00px;color:#111;transform:scaleX(0.8850);transform-origin:0 0;">ООО &quot;Альфа&quot;</div>
<div class="t" style="left:240px;top:158.30px;font-size:10.00px;color:#111;transform:scaleX(0.9000);transform-origin:0 0;">1161</div>
<div class="t" style="left:280px;top:158.30px;font-size:10.00px;color:#111;transform:scaleX(0.8930);transform-origin:0 0;">18.12.2024</div>
<div class="t" style="left:340px;top:158.30px;font-size:10.00px;color:#111;transform:scaleX(0.9088);transform-origin:0 0;">Проверен</div>
<div class="t" style="left:560px;top:158.30px;font-size:10.00px;color:#111;transform:scaleX(0.8930);transform-origin:0 0;">18.12.2024</div>
<div class="t" style="left:620px;top:158.30px;font-size:10.00px;color:#111;transform:scaleX(0.9050);transform-origin:0 0;">12-ткест</div>
<div class="t" style="left:710px;top:158.30px;font-size:10.00px;color:#111;transform:scaleX(0.8930);transform-origin:0 0;">18.12.2024</div>
<div class="t" style="left:820px;top:158.30px;font-size:10.00px;color:#111;transform:scaleX(0.8650);transform-origin:0 0;">АВРОРА ООО</div>
<div class="t" style="left:1034px;top:158.30px;font-size:10.00px;color:#111;transform:scaleX(0.9000);transform-origin:0 0;">0276968487</div>
<div class="t" style="left:1107px;top:158.30px;font-size:10.00px;color:#111;transform:scaleX(0.9050);transform-origin:0 0;">Склад</div>
<div class="t" style="left:1294px;top:158.30px;font-size:10.00px;color:#111;transform:scaleX(0.9050);transform-origin:0 0;">Склад</div>
<div class="cb" style="left:6px;top:153px;"></div>
<svg style="position:absolute;left:33.2px;top:152.60px" width="12" height="12" viewBox="0 0 12 12"><circle cx="4.8" cy="5" r="3.45" fill="none" stroke="#3d4048" stroke-width="1.5"/><path d="M7.2 7.5 L10.3 10.6" stroke="#3d4048" stroke-width="1.6" stroke-linecap="round"/></svg>
<div class="cb" style="left:435px;top:153px;border-color:#d3d4da;"><svg style="position:absolute;left:1px;top:1px" width="8" height="8" viewBox="0 0 8 8"><path d="M1.1 3.6 L2.9 5.2 L6.5 1.6" fill="none" stroke="#3d3f45" stroke-width="1.7" stroke-linejoin="round"/></svg></div>
<div class="cb" style="left:785px;top:153px;border-color:#d3d4da;"></div>
<div style="position:absolute;left:1px;top:187px;width:1314px;height:1px;background:#dcdde7;"></div>
<div class="t" style="left:94px;top:176.95px;font-size:10.00px;color:#111;transform:scaleX(0.8850);transform-origin:0 0;">ООО &quot;Альфа&quot;</div>
<div class="t" style="left:240px;top:176.95px;font-size:10.00px;color:#111;transform:scaleX(0.9000);transform-origin:0 0;">1162</div>
<div class="t" style="left:280px;top:176.95px;font-size:10.00px;color:#111;transform:scaleX(0.8930);transform-origin:0 0;">18.12.2024</div>
<div class="t" style="left:340px;top:176.95px;font-size:10.00px;color:#111;transform:scaleX(0.9088);transform-origin:0 0;">Проверен</div>
<div class="t" style="left:560px;top:176.95px;font-size:10.00px;color:#111;transform:scaleX(0.8930);transform-origin:0 0;">18.12.2024</div>
<div class="t" style="left:620px;top:176.95px;font-size:10.00px;color:#111;transform:scaleX(0.9050);transform-origin:0 0;">12-ткест</div>
<div class="t" style="left:710px;top:176.95px;font-size:10.00px;color:#111;transform:scaleX(0.8930);transform-origin:0 0;">18.12.2024</div>
<div class="t" style="left:820px;top:176.95px;font-size:10.00px;color:#111;transform:scaleX(0.8650);transform-origin:0 0;">АВРОРА ООО</div>
<div class="t" style="left:1034px;top:176.95px;font-size:10.00px;color:#111;transform:scaleX(0.9000);transform-origin:0 0;">0276968487</div>
<div class="t" style="left:1107px;top:176.95px;font-size:10.00px;color:#111;transform:scaleX(0.9050);transform-origin:0 0;">Склад</div>
<div class="t" style="left:1294px;top:176.95px;font-size:10.00px;color:#111;transform:scaleX(0.9050);transform-origin:0 0;">Склад</div>
<div class="cb" style="left:6px;top:172px;"></div>
<svg style="position:absolute;left:33.2px;top:171.25px" width="12" height="12" viewBox="0 0 12 12"><circle cx="4.8" cy="5" r="3.45" fill="none" stroke="#3d4048" stroke-width="1.5"/><path d="M7.2 7.5 L10.3 10.6" stroke="#3d4048" stroke-width="1.6" stroke-linecap="round"/></svg>
<div class="cb" style="left:435px;top:172px;border-color:#d3d4da;"><svg style="position:absolute;left:1px;top:1px" width="8" height="8" viewBox="0 0 8 8"><path d="M1.1 3.6 L2.9 5.2 L6.5 1.6" fill="none" stroke="#3d3f45" stroke-width="1.7" stroke-linejoin="round"/></svg></div>
<div class="cb" style="left:785px;top:172px;border-color:#d3d4da;"></div>
<div style="position:absolute;left:1px;top:205px;width:1314px;height:1px;background:#dcdde7;"></div>
<div class="t" style="left:94px;top:195.60px;font-size:10.00px;color:#111;transform:scaleX(0.8850);transform-origin:0 0;">ООО &quot;Альфа&quot;</div>
<div class="t" style="left:240px;top:195.60px;font-size:10.00px;color:#111;transform:scaleX(0.9000);transform-origin:0 0;">1165</div>
<div class="t" style="left:280px;top:195.60px;font-size:10.00px;color:#111;transform:scaleX(0.8930);transform-origin:0 0;">18.12.2024</div>
<div class="t" style="left:340px;top:195.60px;font-size:10.00px;color:#111;transform:scaleX(0.9108);transform-origin:0 0;">Принят к учету</div>
<div class="t" style="left:820px;top:195.60px;font-size:10.00px;color:#111;transform:scaleX(0.8650);transform-origin:0 0;">АВРОРА ООО</div>
<div class="t" style="left:1034px;top:195.60px;font-size:10.00px;color:#111;transform:scaleX(0.9000);transform-origin:0 0;">0276968487</div>
<div class="t" style="left:1294px;top:195.60px;font-size:10.00px;color:#111;transform:scaleX(0.9050);transform-origin:0 0;">Склад</div>
<div class="cb" style="left:6px;top:190px;"></div>
<svg style="position:absolute;left:33.2px;top:189.90px" width="12" height="12" viewBox="0 0 12 12"><circle cx="4.8" cy="5" r="3.45" fill="none" stroke="#3d4048" stroke-width="1.5"/><path d="M7.2 7.5 L10.3 10.6" stroke="#3d4048" stroke-width="1.6" stroke-linecap="round"/></svg>
<div class="cb" style="left:435px;top:190px;border-color:#d3d4da;"><svg style="position:absolute;left:1px;top:1px" width="8" height="8" viewBox="0 0 8 8"><path d="M1.1 3.6 L2.9 5.2 L6.5 1.6" fill="none" stroke="#3d3f45" stroke-width="1.7" stroke-linejoin="round"/></svg></div>
<div class="cb" style="left:785px;top:190px;border-color:#d3d4da;"></div>
<div style="position:absolute;left:1px;top:224px;width:1314px;height:1px;background:#dcdde7;"></div>
<div class="t" style="left:94px;top:214.25px;font-size:10.00px;color:#111;transform:scaleX(0.8850);transform-origin:0 0;">ООО &quot;Альфа&quot;</div>
<div class="t" style="left:240px;top:214.25px;font-size:10.00px;color:#111;transform:scaleX(0.9000);transform-origin:0 0;">1166</div>
<div class="t" style="left:280px;top:214.25px;font-size:10.00px;color:#111;transform:scaleX(0.8930);transform-origin:0 0;">18.12.2024</div>
<div class="t" style="left:340px;top:214.25px;font-size:10.00px;color:#111;transform:scaleX(0.9108);transform-origin:0 0;">Принят к учету</div>
<div class="t" style="left:820px;top:214.25px;font-size:10.00px;color:#111;transform:scaleX(0.8650);transform-origin:0 0;">АВРОРА ООО</div>
<div class="t" style="left:1034px;top:214.25px;font-size:10.00px;color:#111;transform:scaleX(0.9000);transform-origin:0 0;">0276968487</div>
<div class="t" style="left:1294px;top:214.25px;font-size:10.00px;color:#111;transform:scaleX(0.9050);transform-origin:0 0;">Склад</div>
<div class="cb" style="left:6px;top:209px;"></div>
<svg style="position:absolute;left:33.2px;top:208.55px" width="12" height="12" viewBox="0 0 12 12"><circle cx="4.8" cy="5" r="3.45" fill="none" stroke="#3d4048" stroke-width="1.5"/><path d="M7.2 7.5 L10.3 10.6" stroke="#3d4048" stroke-width="1.6" stroke-linecap="round"/></svg>
<div class="cb" style="left:435px;top:209px;border-color:#d3d4da;"><svg style="position:absolute;left:1px;top:1px" width="8" height="8" viewBox="0 0 8 8"><path d="M1.1 3.6 L2.9 5.2 L6.5 1.6" fill="none" stroke="#3d3f45" stroke-width="1.7" stroke-linejoin="round"/></svg></div>
<div class="cb" style="left:785px;top:209px;border-color:#d3d4da;"><svg style="position:absolute;left:1px;top:1px" width="8" height="8" viewBox="0 0 8 8"><path d="M1.1 3.6 L2.9 5.2 L6.5 1.6" fill="none" stroke="#3d3f45" stroke-width="1.7" stroke-linejoin="round"/></svg></div>
<div style="position:absolute;left:1px;top:243px;width:1314px;height:1px;background:#dcdde7;"></div>
<div class="t" style="left:94px;top:232.90px;font-size:10.00px;color:#111;transform:scaleX(0.8850);transform-origin:0 0;">ООО &quot;Альфа&quot;</div>
<div class="t" style="left:240px;top:232.90px;font-size:10.00px;color:#111;transform:scaleX(0.9000);transform-origin:0 0;">181</div>
<div class="t" style="left:280px;top:232.90px;font-size:10.00px;color:#111;transform:scaleX(0.8930);transform-origin:0 0;">18.12.2024</div>
<div class="t" style="left:340px;top:232.90px;font-size:10.00px;color:#111;transform:scaleX(0.9067);transform-origin:0 0;">Создан</div>
<div class="t" style="left:470px;top:232.90px;font-size:10.00px;color:#111;transform:scaleX(0.9000);transform-origin:0 0;">182</div>
<div class="t" style="left:560px;top:232.90px;font-size:10.00px;color:#111;transform:scaleX(0.8930);transform-origin:0 0;">18.12.2024</div>
<div class="t" style="left:620px;top:232.90px;font-size:10.00px;color:#111;transform:scaleX(0.9000);transform-origin:0 0;">2412003</div>
<div class="t" style="left:710px;top:232.90px;font-size:10.00px;color:#111;transform:scaleX(0.8930);transform-origin:0 0;">18.12.2024</div>
<div class="t" style="left:820px;top:232.90px;font-size:10.00px;color:#111;transform:scaleX(0.8900);transform-origin:0 0;">Альфа ООО</div>
<div class="t" style="left:1034px;top:232.90px;font-size:10.00px;color:#111;transform:scaleX(0.9000);transform-origin:0 0;">0275025708</div>
<div class="t" style="left:1107px;top:232.90px;font-size:10.00px;color:#111;transform:scaleX(0.9050);transform-origin:0 0;">Склад</div>
<div class="t" style="left:1294px;top:232.90px;font-size:10.00px;color:#111;transform:scaleX(0.9050);transform-origin:0 0;">Склад</div>
<div class="cb" style="left:6px;top:228px;"></div>
<svg style="position:absolute;left:33.2px;top:227.20px" width="12" height="12" viewBox="0 0 12 12"><circle cx="4.8" cy="5" r="3.45" fill="none" stroke="#3d4048" stroke-width="1.5"/><path d="M7.2 7.5 L10.3 10.6" stroke="#3d4048" stroke-width="1.6" stroke-linecap="round"/></svg>
<div class="cb" style="left:435px;top:228px;border-color:#d3d4da;"><svg style="position:absolute;left:1px;top:1px" width="8" height="8" viewBox="0 0 8 8"><path d="M1.1 3.6 L2.9 5.2 L6.5 1.6" fill="none" stroke="#3d3f45" stroke-width="1.7" stroke-linejoin="round"/></svg></div>
<div class="cb" style="left:785px;top:228px;border-color:#d3d4da;"></div>
<div style="position:absolute;left:1px;top:261px;width:1314px;height:1px;background:#dcdde7;"></div>
<div class="t" style="left:94px;top:251.55px;font-size:10.00px;color:#111;transform:scaleX(0.8850);transform-origin:0 0;">ООО &quot;Альфа&quot;</div>
<div class="t" style="left:240px;top:251.55px;font-size:10.00px;color:#111;transform:scaleX(0.9000);transform-origin:0 0;">1164</div>
<div class="t" style="left:280px;top:251.55px;font-size:10.00px;color:#111;transform:scaleX(0.8930);transform-origin:0 0;">18.12.2024</div>
<div class="t" style="left:340px;top:251.55px;font-size:10.00px;color:#111;transform:scaleX(0.9108);transform-origin:0 0;">Принят к учету</div>
<div class="t" style="left:820px;top:251.55px;font-size:10.00px;color:#111;transform:scaleX(0.8650);transform-origin:0 0;">АВРОРА ООО</div>
<div class="t" style="left:1034px;top:251.55px;font-size:10.00px;color:#111;transform:scaleX(0.9000);transform-origin:0 0;">0276968487</div>
<div class="t" style="left:1107px;top:251.55px;font-size:10.00px;color:#111;transform:scaleX(0.9050);transform-origin:0 0;">Склад</div>
<div class="t" style="left:1294px;top:251.55px;font-size:10.00px;color:#111;transform:scaleX(0.9050);transform-origin:0 0;">Склад</div>
<div class="cb" style="left:6px;top:246px;"></div>
<svg style="position:absolute;left:33.2px;top:245.85px" width="12" height="12" viewBox="0 0 12 12"><circle cx="4.8" cy="5" r="3.45" fill="none" stroke="#3d4048" stroke-width="1.5"/><path d="M7.2 7.5 L10.3 10.6" stroke="#3d4048" stroke-width="1.6" stroke-linecap="round"/></svg>
<div class="cb" style="left:435px;top:246px;border-color:#d3d4da;"><svg style="position:absolute;left:1px;top:1px" width="8" height="8" viewBox="0 0 8 8"><path d="M1.1 3.6 L2.9 5.2 L6.5 1.6" fill="none" stroke="#3d3f45" stroke-width="1.7" stroke-linejoin="round"/></svg></div>
<div class="cb" style="left:785px;top:246px;border-color:#d3d4da;"></div>
<div style="position:absolute;left:1px;top:280px;width:1314px;height:1px;background:#dcdde7;"></div>
<div class="t" style="left:94px;top:270.20px;font-size:10.00px;color:#111;transform:scaleX(0.8850);transform-origin:0 0;">ООО &quot;Альфа&quot;</div>
<div class="t" style="left:240px;top:270.20px;font-size:10.00px;color:#111;transform:scaleX(0.9000);transform-origin:0 0;">1143</div>
<div class="t" style="left:280px;top:270.20px;font-size:10.00px;color:#111;transform:scaleX(0.8930);transform-origin:0 0;">02.12.2024</div>
<div class="t" style="left:340px;top:270.20px;font-size:10.00px;color:#111;transform:scaleX(0.9108);transform-origin:0 0;">Принят к учету</div>
<div class="t" style="left:470px;top:270.20px;font-size:10.00px;color:#111;transform:scaleX(0.9000);transform-origin:0 0;">33</div>
<div class="t" style="left:560px;top:270.20px;font-size:10.00px;color:#111;transform:scaleX(0.8930);transform-origin:0 0;">02.12.2024</div>
<div class="t" style="left:620px;top:270.20px;font-size:10.00px;color:#111;transform:scaleX(0.9000);transform-origin:0 0;">3</div>
<div class="t" style="left:710px;top:270.20px;font-size:10.00px;color:#111;transform:scaleX(0.8930);transform-origin:0 0;">02.12.2024</div>
<div class="t" style="left:820px;top:270.20px;font-size:10.00px;color:#111;transform:scaleX(0.8650);transform-origin:0 0;">АВТОГАРАНТ КОМПАНИЯ ООО</div>
<div class="t" style="left:1034px;top:270.20px;font-size:10.00px;color:#111;transform:scaleX(0.9000);transform-origin:0 0;">3123395700</div>
<div class="t" style="left:1107px;top:270.20px;font-size:10.00px;color:#111;transform:scaleX(0.9050);transform-origin:0 0;">Склад</div>
<div class="t" style="left:1294px;top:270.20px;font-size:10.00px;color:#111;transform:scaleX(0.9050);transform-origin:0 0;">Склад</div>
<div class="cb" style="left:6px;top:265px;"></div>
<svg style="position:absolute;left:33.2px;top:264.50px" width="12" height="12" viewBox="0 0 12 12"><circle cx="4.8" cy="5" r="3.45" fill="none" stroke="#3d4048" stroke-width="1.5"/><path d="M7.2 7.5 L10.3 10.6" stroke="#3d4048" stroke-width="1.6" stroke-linecap="round"/></svg>
<div class="cb" style="left:435px;top:265px;border-color:#d3d4da;"><svg style="position:absolute;left:1px;top:1px" width="8" height="8" viewBox="0 0 8 8"><path d="M1.1 3.6 L2.9 5.2 L6.5 1.6" fill="none" stroke="#3d3f45" stroke-width="1.7" stroke-linejoin="round"/></svg></div>
<div class="cb" style="left:785px;top:265px;border-color:#d3d4da;"></div>
<div style="position:absolute;left:22px;top:281px;width:1293px;height:17px;background:#ffbd8c;"></div>
<div style="position:absolute;left:1px;top:298px;width:1314px;height:1px;background:#dcdde7;"></div>
<div class="t" style="left:94px;top:288.85px;font-size:10.00px;color:#111;transform:scaleX(0.8850);transform-origin:0 0;">ООО &quot;Альфа&quot;</div>
<div class="t" style="left:240px;top:288.85px;font-size:10.00px;color:#111;transform:scaleX(0.9000);transform-origin:0 0;">1150</div>
<div class="t" style="left:280px;top:288.85px;font-size:10.00px;color:#111;transform:scaleX(0.8930);transform-origin:0 0;">02.12.2024</div>
<div class="t" style="left:340px;top:288.85px;font-size:10.00px;color:#111;transform:scaleX(0.9067);transform-origin:0 0;">Создан</div>
<div class="t" style="left:820px;top:288.85px;font-size:10.00px;color:#111;transform:scaleX(0.8650);transform-origin:0 0;">ЛЕКСЕМА ООО</div>
<div class="t" style="left:1034px;top:288.85px;font-size:10.00px;color:#111;transform:scaleX(0.9000);transform-origin:0 0;">0273021786</div>
<div class="t" style="left:1107px;top:288.85px;font-size:10.00px;color:#111;transform:scaleX(0.9105);transform-origin:0 0;">Отдел кадров</div>
<div class="t" style="left:1294px;top:288.85px;font-size:10.00px;color:#111;transform:scaleX(0.9050);transform-origin:0 0;">Склад</div>
<div class="cb" style="left:6px;top:284px;"></div>
<svg style="position:absolute;left:33.2px;top:283.15px" width="12" height="12" viewBox="0 0 12 12"><circle cx="4.8" cy="5" r="3.45" fill="none" stroke="#3d4048" stroke-width="1.5"/><path d="M7.2 7.5 L10.3 10.6" stroke="#3d4048" stroke-width="1.6" stroke-linecap="round"/></svg>
<div class="cb" style="left:435px;top:284px;border-color:#e6e8f0;"></div>
<div class="cb" style="left:785px;top:284px;border-color:#e6e8f0;"></div>
<div style="position:absolute;left:22px;top:299px;width:1293px;height:18px;background:#ffbd8c;"></div>
<div style="position:absolute;left:1px;top:317px;width:1314px;height:1px;background:#dcdde7;"></div>
<div class="t" style="left:94px;top:307.50px;font-size:10.00px;color:#111;transform:scaleX(0.8850);transform-origin:0 0;">ООО &quot;Альфа&quot;</div>
<div class="t" style="left:240px;top:307.50px;font-size:10.00px;color:#111;transform:scaleX(0.9000);transform-origin:0 0;">1151</div>
<div class="t" style="left:280px;top:307.50px;font-size:10.00px;color:#111;transform:scaleX(0.8930);transform-origin:0 0;">02.12.2024</div>
<div class="t" style="left:340px;top:307.50px;font-size:10.00px;color:#111;transform:scaleX(0.9067);transform-origin:0 0;">Создан</div>
<div class="t" style="left:820px;top:307.50px;font-size:10.00px;color:#111;transform:scaleX(0.8650);transform-origin:0 0;">ЛЕКСЕМА ООО</div>
<div class="t" style="left:1034px;top:307.50px;font-size:10.00px;color:#111;transform:scaleX(0.9000);transform-origin:0 0;">0273021786</div>
<div class="t" style="left:1107px;top:307.50px;font-size:10.00px;color:#111;transform:scaleX(0.9105);transform-origin:0 0;">Отдел кадров</div>
<div class="t" style="left:1294px;top:307.50px;font-size:10.00px;color:#111;transform:scaleX(0.9050);transform-origin:0 0;">Склад</div>
<div class="cb" style="left:6px;top:302px;"></div>
<svg style="position:absolute;left:33.2px;top:301.80px" width="12" height="12" viewBox="0 0 12 12"><circle cx="4.8" cy="5" r="3.45" fill="none" stroke="#3d4048" stroke-width="1.5"/><path d="M7.2 7.5 L10.3 10.6" stroke="#3d4048" stroke-width="1.6" stroke-linecap="round"/></svg>
<div class="cb" style="left:435px;top:302px;border-color:#e6e8f0;"></div>
<div class="cb" style="left:785px;top:302px;border-color:#e6e8f0;"></div>
<div style="position:absolute;left:22px;top:318px;width:1293px;height:18px;background:#ffbd8c;"></div>
<div style="position:absolute;left:1px;top:336px;width:1314px;height:1px;background:#dcdde7;"></div>
<div class="t" style="left:94px;top:326.15px;font-size:10.00px;color:#111;transform:scaleX(0.8850);transform-origin:0 0;">ООО &quot;Альфа&quot;</div>
<div class="t" style="left:240px;top:326.15px;font-size:10.00px;color:#111;transform:scaleX(0.9000);transform-origin:0 0;">1152</div>
<div class="t" style="left:280px;top:326.15px;font-size:10.00px;color:#111;transform:scaleX(0.8930);transform-origin:0 0;">02.12.2024</div>
<div class="t" style="left:340px;top:326.15px;font-size:10.00px;color:#111;transform:scaleX(0.9067);transform-origin:0 0;">Создан</div>
<div class="t" style="left:820px;top:326.15px;font-size:10.00px;color:#111;transform:scaleX(0.8650);transform-origin:0 0;">ЛЕКСЕМА ООО</div>
<div class="t" style="left:1034px;top:326.15px;font-size:10.00px;color:#111;transform:scaleX(0.9000);transform-origin:0 0;">0273021786</div>
<div class="t" style="left:1107px;top:326.15px;font-size:10.00px;color:#111;transform:scaleX(0.9105);transform-origin:0 0;">Отдел кадров</div>
<div class="t" style="left:1294px;top:326.15px;font-size:10.00px;color:#111;transform:scaleX(0.9050);transform-origin:0 0;">Склад</div>
<div class="cb" style="left:6px;top:321px;"></div>
<svg style="position:absolute;left:33.2px;top:320.45px" width="12" height="12" viewBox="0 0 12 12"><circle cx="4.8" cy="5" r="3.45" fill="none" stroke="#3d4048" stroke-width="1.5"/><path d="M7.2 7.5 L10.3 10.6" stroke="#3d4048" stroke-width="1.6" stroke-linecap="round"/></svg>
<div class="cb" style="left:435px;top:321px;border-color:#e6e8f0;"></div>
<div class="cb" style="left:785px;top:321px;border-color:#e6e8f0;"></div>
<div style="position:absolute;left:22px;top:337px;width:1293px;height:17px;background:#ffbd8c;"></div>
<div style="position:absolute;left:1px;top:354px;width:1314px;height:1px;background:#dcdde7;"></div>
<div class="t" style="left:94px;top:344.80px;font-size:10.00px;color:#111;transform:scaleX(0.8850);transform-origin:0 0;">ООО &quot;Альфа&quot;</div>
<div class="t" style="left:240px;top:344.80px;font-size:10.00px;color:#111;transform:scaleX(0.9000);transform-origin:0 0;">1154</div>
<div class="t" style="left:280px;top:344.80px;font-size:10.00px;color:#111;transform:scaleX(0.8930);transform-origin:0 0;">02.12.2024</div>
<div class="t" style="left:340px;top:344.80px;font-size:10.00px;color:#111;transform:scaleX(0.9067);transform-origin:0 0;">Создан</div>
<div class="t" style="left:820px;top:344.80px;font-size:10.00px;color:#111;transform:scaleX(0.8650);transform-origin:0 0;">АВРОРА ООО</div>
<div class="t" style="left:1034px;top:344.80px;font-size:10.00px;color:#111;transform:scaleX(0.9000);transform-origin:0 0;">0276968487</div>
<div class="t" style="left:1107px;top:344.80px;font-size:10.00px;color:#111;transform:scaleX(0.9133);transform-origin:0 0;">Бюро инструментального хозяйства</div>
<div class="t" style="left:1294px;top:344.80px;font-size:10.00px;color:#111;transform:scaleX(0.9050);transform-origin:0 0;">Склад</div>
<div class="cb" style="left:6px;top:340px;"></div>
<svg style="position:absolute;left:33.2px;top:339.10px" width="12" height="12" viewBox="0 0 12 12"><circle cx="4.8" cy="5" r="3.45" fill="none" stroke="#3d4048" stroke-width="1.5"/><path d="M7.2 7.5 L10.3 10.6" stroke="#3d4048" stroke-width="1.6" stroke-linecap="round"/></svg>
<div class="cb" style="left:435px;top:340px;border-color:#e6e8f0;"></div>
<div class="cb" style="left:785px;top:340px;border-color:#e6e8f0;"></div>
<div style="position:absolute;left:22px;top:355px;width:1293px;height:18px;background:#ffbd8c;"></div>
<div style="position:absolute;left:816px;top:355px;width:213px;height:18px;background:#eef0f3;"></div>
<div style="position:absolute;left:1px;top:373px;width:1314px;height:1px;background:#dcdde7;"></div>
<div class="t" style="left:94px;top:363.45px;font-size:10.00px;color:#111;transform:scaleX(0.8850);transform-origin:0 0;">ООО &quot;Альфа&quot;</div>
<div class="t" style="left:240px;top:363.45px;font-size:10.00px;color:#111;transform:scaleX(0.9000);transform-origin:0 0;">1153</div>
<div class="t" style="left:280px;top:363.45px;font-size:10.00px;color:#111;transform:scaleX(0.8930);transform-origin:0 0;">02.12.2024</div>
<div class="t" style="left:340px;top:363.45px;font-size:10.00px;color:#111;transform:scaleX(0.9067);transform-origin:0 0;">Создан</div>
<div class="t" style="left:820px;top:363.45px;font-size:10.00px;color:#111;transform:scaleX(0.8650);transform-origin:0 0;">ЛЕКСЕМА ООО</div>
<div class="t" style="left:1034px;top:363.45px;font-size:10.00px;color:#111;transform:scaleX(0.9000);transform-origin:0 0;">0273021786</div>
<div class="t" style="left:1107px;top:363.45px;font-size:10.00px;color:#111;transform:scaleX(0.9133);transform-origin:0 0;">Бюро инструментального хозяйства</div>
<div class="t" style="left:1294px;top:363.45px;font-size:10.00px;color:#111;transform:scaleX(0.9050);transform-origin:0 0;">Склад</div>
<div class="cb" style="left:6px;top:358px;"></div>
<svg style="position:absolute;left:33.2px;top:357.75px" width="12" height="12" viewBox="0 0 12 12"><circle cx="4.8" cy="5" r="3.45" fill="none" stroke="#3d4048" stroke-width="1.5"/><path d="M7.2 7.5 L10.3 10.6" stroke="#3d4048" stroke-width="1.6" stroke-linecap="round"/></svg>
<div class="cb" style="left:435px;top:358px;border-color:#e6e8f0;"></div>
<div class="cb" style="left:785px;top:358px;border-color:#e6e8f0;"></div>
<div style="position:absolute;left:22px;top:0px;width:1px;height:400px;background:#dcdde7;"></div>
<div style="position:absolute;left:55px;top:0px;width:1px;height:400px;background:#dcdde7;"></div>
<div style="position:absolute;left:89px;top:0px;width:1px;height:400px;background:#dcdde7;"></div>
<div style="position:absolute;left:235px;top:0px;width:1px;height:400px;background:#dcdde7;"></div>
<div style="position:absolute;left:275px;top:0px;width:1px;height:400px;background:#dcdde7;"></div>
<div style="position:absolute;left:335px;top:0px;width:1px;height:400px;background:#dcdde7;"></div>
<div style="position:absolute;left:415px;top:0px;width:1px;height:400px;background:#dcdde7;"></div>
<div style="position:absolute;left:465px;top:0px;width:1px;height:400px;background:#dcdde7;"></div>
<div style="position:absolute;left:555px;top:0px;width:1px;height:400px;background:#dcdde7;"></div>
<div style="position:absolute;left:615px;top:0px;width:1px;height:400px;background:#dcdde7;"></div>
<div style="position:absolute;left:705px;top:0px;width:1px;height:400px;background:#dcdde7;"></div>
<div style="position:absolute;left:765px;top:0px;width:1px;height:400px;background:#dcdde7;"></div>
<div style="position:absolute;left:815px;top:0px;width:1px;height:400px;background:#dcdde7;"></div>
<div style="position:absolute;left:1029px;top:0px;width:1px;height:400px;background:#dcdde7;"></div>
<div style="position:absolute;left:1102px;top:0px;width:1px;height:400px;background:#dcdde7;"></div>
<div style="position:absolute;left:1289px;top:0px;width:1px;height:400px;background:#dcdde7;"></div>
</div>
<div style="position:absolute;left:1px;top:136px;width:1px;height:400px;background:#dcdde7;"></div>
<svg style="position:absolute;left:1319px;top:142px" width="9" height="6" viewBox="0 0 9 6"><path d="M0.5 5.5 L4.5 1 L8.5 5.5Z" fill="#a9abb2"/></svg>
<div style="position:absolute;left:1317px;top:153px;width:13px;height:17px;background:#a9abb2;"></div>
<div style="position:absolute;left:764px;top:77px;width:56px;height:500px;box-sizing:border-box;border:3px solid #ff0000;border-bottom:none;border-radius:3px 3px 0 0;"></div>
</body></html>
